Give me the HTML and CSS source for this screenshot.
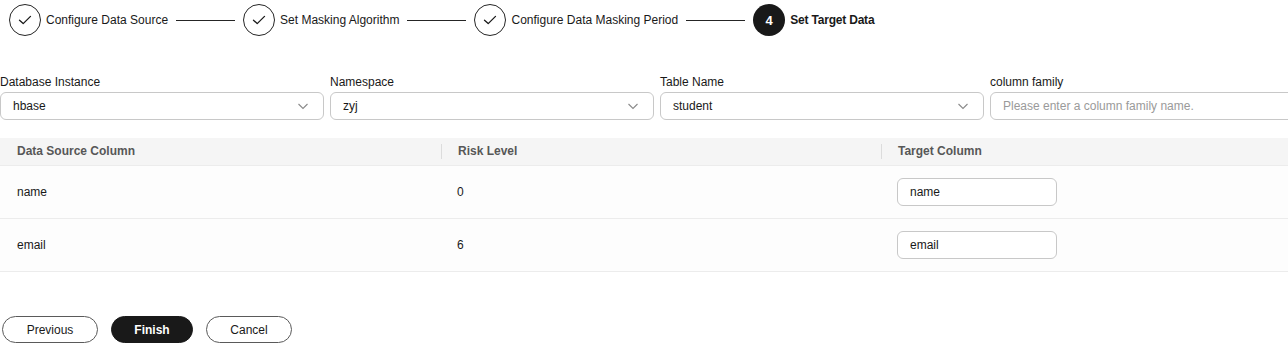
FILE: index.html
```html
<!DOCTYPE html>
<html lang="en">
<head>
  <meta charset="UTF-8">
  <meta name="viewport" content="width=device-width, initial-scale=1">
  <title>Set Target Data</title>
  <link rel="stylesheet" href="styles.css">
</head>
<body>
  <div class="page">
    <!-- Wizard steps -->
    <div class="steps">
      <div class="step">
        <span class="step-icon done">
          <svg width="16" height="16" viewBox="0 0 16 16"><path d="M2.5 8.3 L6.2 11.6 L13.5 4.4" fill="none" stroke="#191919" stroke-width="1.3" stroke-linecap="round" stroke-linejoin="round"/></svg>
        </span>
        <span class="step-text">Configure Data Source</span>
      </div>
      <div class="step-line"></div>
      <div class="step">
        <span class="step-icon done">
          <svg width="16" height="16" viewBox="0 0 16 16"><path d="M2.5 8.3 L6.2 11.6 L13.5 4.4" fill="none" stroke="#191919" stroke-width="1.3" stroke-linecap="round" stroke-linejoin="round"/></svg>
        </span>
        <span class="step-text">Set Masking Algorithm</span>
      </div>
      <div class="step-line"></div>
      <div class="step">
        <span class="step-icon done">
          <svg width="16" height="16" viewBox="0 0 16 16"><path d="M2.5 8.3 L6.2 11.6 L13.5 4.4" fill="none" stroke="#191919" stroke-width="1.3" stroke-linecap="round" stroke-linejoin="round"/></svg>
        </span>
        <span class="step-text">Configure Data Masking Period</span>
      </div>
      <div class="step-line"></div>
      <div class="step">
        <span class="step-icon active">4</span>
        <span class="step-text current">Set Target Data</span>
      </div>
    </div>

    <!-- Target selection -->
    <div class="form-row">
      <div class="field">
        <label class="field-label">Database Instance</label>
        <div class="select">
          <span>hbase</span>
          <svg class="chevron" width="12" height="12" viewBox="0 0 12 12"><path d="M1.5 4 L6 8.5 L10.5 4" fill="none" stroke="#8a8a8a" stroke-width="1.1"/></svg>
        </div>
      </div>
      <div class="field">
        <label class="field-label">Namespace</label>
        <div class="select">
          <span>zyj</span>
          <svg class="chevron" width="12" height="12" viewBox="0 0 12 12"><path d="M1.5 4 L6 8.5 L10.5 4" fill="none" stroke="#8a8a8a" stroke-width="1.1"/></svg>
        </div>
      </div>
      <div class="field">
        <label class="field-label">Table Name</label>
        <div class="select">
          <span>student</span>
          <svg class="chevron" width="12" height="12" viewBox="0 0 12 12"><path d="M1.5 4 L6 8.5 L10.5 4" fill="none" stroke="#8a8a8a" stroke-width="1.1"/></svg>
        </div>
      </div>
      <div class="field">
        <label class="field-label">column family</label>
        <input class="text-input" type="text" placeholder="Please enter a column family name.">
      </div>
    </div>

    <!-- Column mapping -->
    <div class="table">
      <div class="table-head">
        <div class="cell">Data Source Column</div>
        <div class="cell divided">Risk Level</div>
        <div class="cell divided">Target Column</div>
      </div>
      <div class="table-row">
        <div class="cell">name</div>
        <div class="cell">0</div>
        <div class="cell"><input class="cell-input" type="text" value="name"></div>
      </div>
      <div class="table-row">
        <div class="cell">email</div>
        <div class="cell">6</div>
        <div class="cell"><input class="cell-input" type="text" value="email"></div>
      </div>
    </div>

    <div class="actions">
      <button class="btn btn-prev">Previous</button>
      <button class="btn primary">Finish</button>
      <button class="btn btn-cancel">Cancel</button>
    </div>
  </div>
</body>
</html>
```

FILE: styles.css
```css
body {
  font-family: "Liberation Sans", Arial, sans-serif;
  font-size: 12px;
  color: #191919;
  background: #fff;
  margin: 0;
  overflow: hidden;
}
.page {
  width: 1288px;
}
.steps {
  display: flex;
  align-items: center;
  height: 40px;
  padding-left: 9px;
}
.step {
  display: flex;
  align-items: center;
  gap: 5px;
}
.step-icon {
  width: 32px;
  height: 32px;
  box-sizing: border-box;
  border-radius: 50%;
  display: flex;
  align-items: center;
  justify-content: center;
}
.step-icon.done {
  border: 1px solid #252525;
}
.step-icon.active {
  background: #191919;
  color: #fff;
  font-weight: bold;
  font-size: 13px;
}
.step-text {
  white-space: nowrap;
}
.step-text.current {
  font-weight: bold;
  letter-spacing: -0.2px;
}
.step-line {
  width: 59px;
  height: 1px;
  background: #252525;
  margin: 0 8px;
}
.form-row {
  display: grid;
  grid-template-columns: repeat(4, 324px);
  gap: 6px;
  margin-top: 35px;
}
.field {
  display: flex;
  flex-direction: column;
  gap: 2px;
}
.field-label {
  line-height: 15px;
}
.select,
.text-input {
  height: 28px;
  box-sizing: border-box;
  border: 1px solid #c8c8c8;
  border-radius: 6px;
  padding: 0 14px 0 12px;
  font-family: inherit;
  font-size: 12px;
  color: #191919;
}
.select {
  display: flex;
  align-items: center;
  justify-content: space-between;
}
.text-input {
  width: 100%;
  outline: none;
}
.text-input::placeholder {
  color: #9a9a9a;
}
.table {
  margin-top: 18px;
  width: 1320px;
}
.table-head,
.table-row {
  display: grid;
  grid-template-columns: 441px 440px 1fr;
  align-items: center;
}
.table-head {
  height: 27px;
  background: #f5f5f5;
  font-weight: bold;
  color: #575757;
}
.table-row {
  height: 52px;
  background: #fdfdfd;
  border-top: 1px solid #ececec;
}
.table-row:last-child {
  border-bottom: 1px solid #ececec;
}
.cell {
  padding-left: 17px;
}
.table-head .cell {
  height: 15px;
  line-height: 15px;
}
.table-head .cell.divided {
  padding-left: 16px;
  border-left: 1px solid #dcdcdc;
}
.table-row .cell:nth-child(2),
.table-row .cell:nth-child(3) {
  padding-left: 16px;
}
.cell-input {
  width: 160px;
  height: 28px;
  box-sizing: border-box;
  border: 1px solid #c8c8c8;
  border-radius: 6px;
  padding: 0 12px;
  font-family: inherit;
  font-size: 12px;
  color: #191919;
  background: #fff;
  outline: none;
}
.actions {
  display: flex;
  gap: 13px;
  margin-top: 44px;
  padding-left: 2px;
}
.btn {
  height: 27px;
  width: 96px;
  padding: 0;
  border: 1px solid #5a5a5a;
  border-radius: 14px;
  background: #fff;
  color: #191919;
  font-family: inherit;
  font-size: 12px;
  cursor: pointer;
}
.btn.primary {
  width: 82px;
  background: #191919;
  border-color: #191919;
  color: #fff;
  font-weight: bold;
}
.btn.btn-cancel {
  width: 86px;
}
```
